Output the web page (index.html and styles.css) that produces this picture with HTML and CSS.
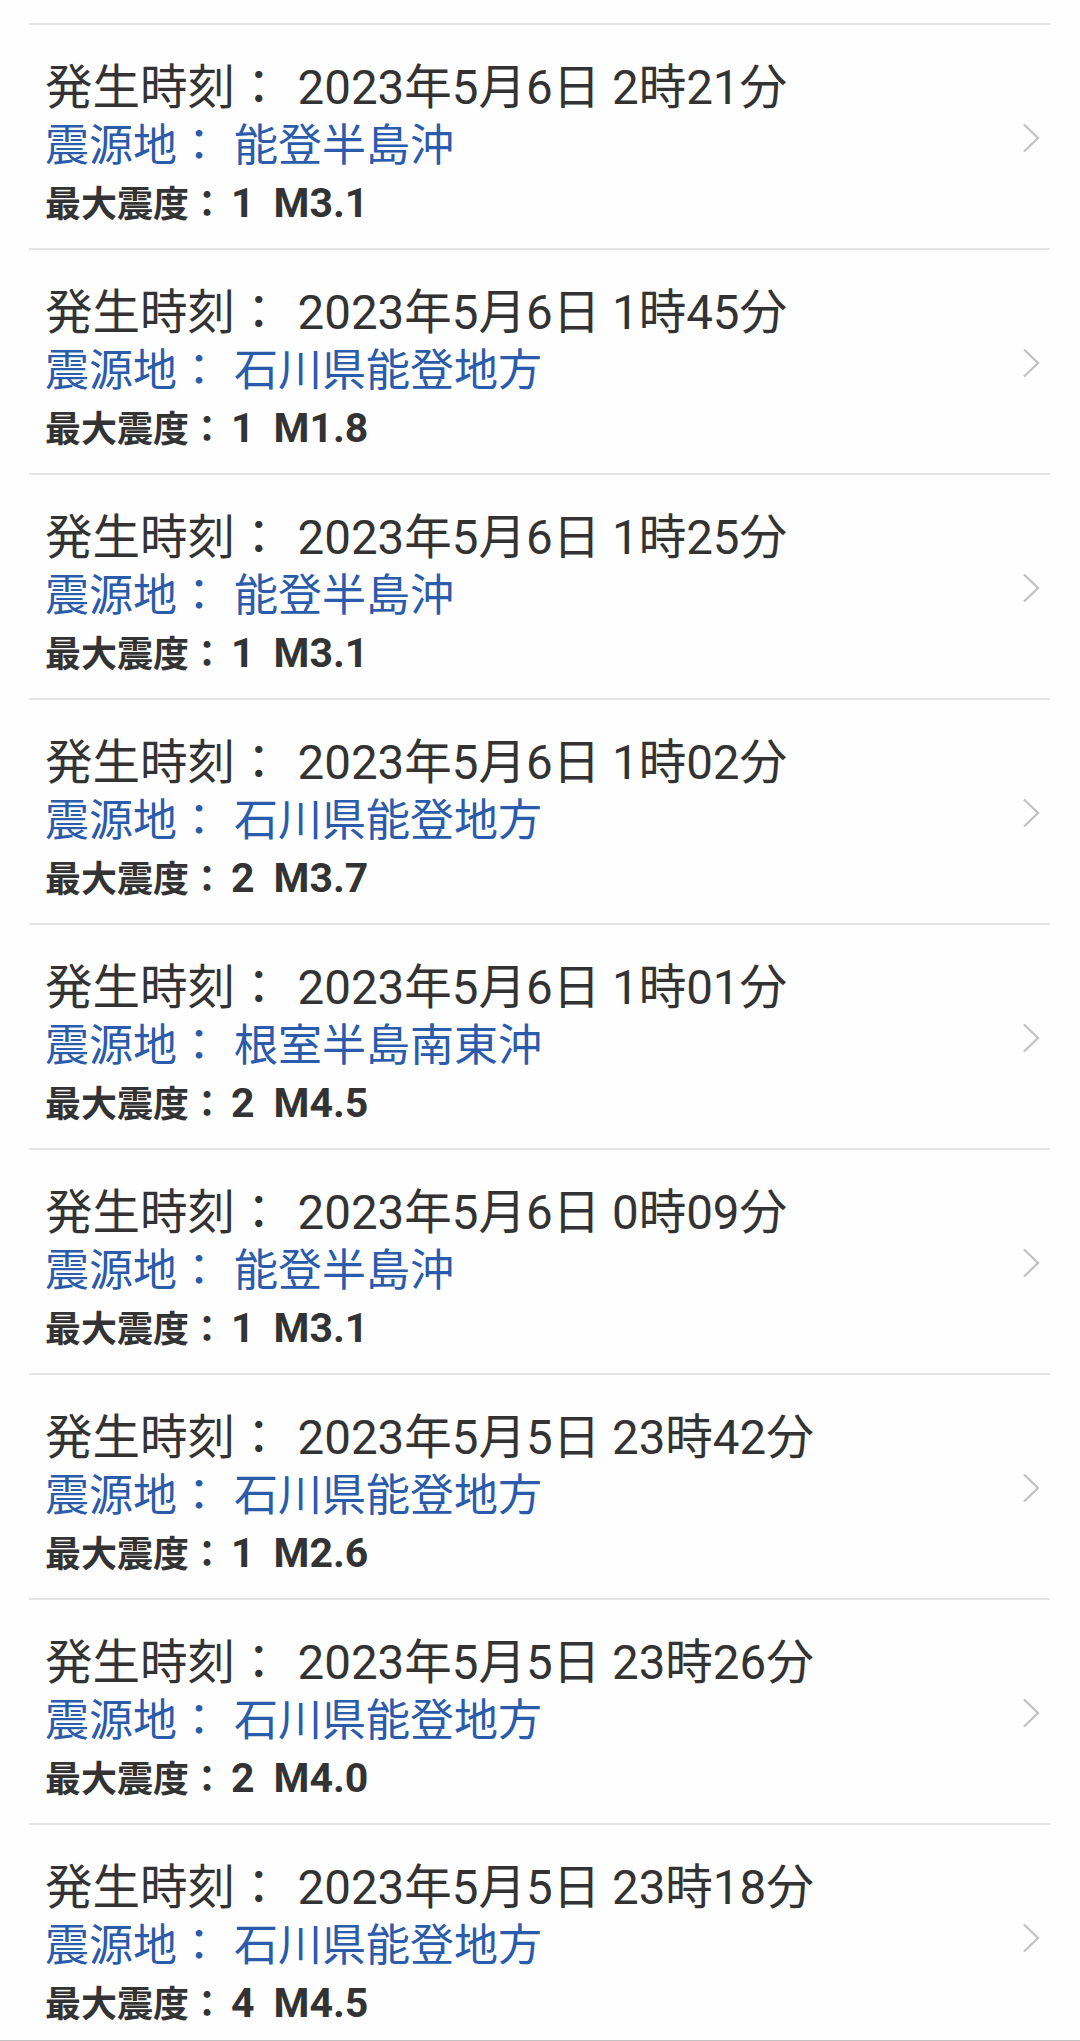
FILE: index.html
```html
<!DOCTYPE html>
<html lang="ja">
<head>
<meta charset="utf-8">
<title>地震情報</title>
<link rel="stylesheet" href="styles.css">
</head>
<body>
<div class="top-gap"></div>
<ul class="list">
  <li class="row">
    <div class="info">
      <div class="l1"><span class="lab">発生時刻：</span><span class="v1">2023年5月6日 2時21分</span></div>
      <div class="l2"><span class="lab">震源地：</span><span class="v2">能登半島沖</span></div>
      <div class="l3"><span class="lab">最大震度：</span><span class="v3">1</span><span class="mag">M3.1</span></div>
    </div>
    <svg class="chev" viewBox="0 0 18 30"><polyline points="2,1.5 16,15 2,28.5"/></svg>
  </li>
  <li class="row">
    <div class="info">
      <div class="l1"><span class="lab">発生時刻：</span><span class="v1">2023年5月6日 1時45分</span></div>
      <div class="l2"><span class="lab">震源地：</span><span class="v2">石川県能登地方</span></div>
      <div class="l3"><span class="lab">最大震度：</span><span class="v3">1</span><span class="mag">M1.8</span></div>
    </div>
    <svg class="chev" viewBox="0 0 18 30"><polyline points="2,1.5 16,15 2,28.5"/></svg>
  </li>
  <li class="row">
    <div class="info">
      <div class="l1"><span class="lab">発生時刻：</span><span class="v1">2023年5月6日 1時25分</span></div>
      <div class="l2"><span class="lab">震源地：</span><span class="v2">能登半島沖</span></div>
      <div class="l3"><span class="lab">最大震度：</span><span class="v3">1</span><span class="mag">M3.1</span></div>
    </div>
    <svg class="chev" viewBox="0 0 18 30"><polyline points="2,1.5 16,15 2,28.5"/></svg>
  </li>
  <li class="row">
    <div class="info">
      <div class="l1"><span class="lab">発生時刻：</span><span class="v1">2023年5月6日 1時02分</span></div>
      <div class="l2"><span class="lab">震源地：</span><span class="v2">石川県能登地方</span></div>
      <div class="l3"><span class="lab">最大震度：</span><span class="v3">2</span><span class="mag">M3.7</span></div>
    </div>
    <svg class="chev" viewBox="0 0 18 30"><polyline points="2,1.5 16,15 2,28.5"/></svg>
  </li>
  <li class="row">
    <div class="info">
      <div class="l1"><span class="lab">発生時刻：</span><span class="v1">2023年5月6日 1時01分</span></div>
      <div class="l2"><span class="lab">震源地：</span><span class="v2">根室半島南東沖</span></div>
      <div class="l3"><span class="lab">最大震度：</span><span class="v3">2</span><span class="mag">M4.5</span></div>
    </div>
    <svg class="chev" viewBox="0 0 18 30"><polyline points="2,1.5 16,15 2,28.5"/></svg>
  </li>
  <li class="row">
    <div class="info">
      <div class="l1"><span class="lab">発生時刻：</span><span class="v1">2023年5月6日 0時09分</span></div>
      <div class="l2"><span class="lab">震源地：</span><span class="v2">能登半島沖</span></div>
      <div class="l3"><span class="lab">最大震度：</span><span class="v3">1</span><span class="mag">M3.1</span></div>
    </div>
    <svg class="chev" viewBox="0 0 18 30"><polyline points="2,1.5 16,15 2,28.5"/></svg>
  </li>
  <li class="row">
    <div class="info">
      <div class="l1"><span class="lab">発生時刻：</span><span class="v1">2023年5月5日 23時42分</span></div>
      <div class="l2"><span class="lab">震源地：</span><span class="v2">石川県能登地方</span></div>
      <div class="l3"><span class="lab">最大震度：</span><span class="v3">1</span><span class="mag">M2.6</span></div>
    </div>
    <svg class="chev" viewBox="0 0 18 30"><polyline points="2,1.5 16,15 2,28.5"/></svg>
  </li>
  <li class="row">
    <div class="info">
      <div class="l1"><span class="lab">発生時刻：</span><span class="v1">2023年5月5日 23時26分</span></div>
      <div class="l2"><span class="lab">震源地：</span><span class="v2">石川県能登地方</span></div>
      <div class="l3"><span class="lab">最大震度：</span><span class="v3">2</span><span class="mag">M4.0</span></div>
    </div>
    <svg class="chev" viewBox="0 0 18 30"><polyline points="2,1.5 16,15 2,28.5"/></svg>
  </li>
  <li class="row">
    <div class="info">
      <div class="l1"><span class="lab">発生時刻：</span><span class="v1">2023年5月5日 23時18分</span></div>
      <div class="l2"><span class="lab">震源地：</span><span class="v2">石川県能登地方</span></div>
      <div class="l3"><span class="lab">最大震度：</span><span class="v3">4</span><span class="mag">M4.5</span></div>
    </div>
    <svg class="chev" viewBox="0 0 18 30"><polyline points="2,1.5 16,15 2,28.5"/></svg>
  </li>
</ul>
</body>
</html>
```
FILE: styles.css
```css
html, body {
  margin: 0;
  padding: 0;
  background: #fefefe;
}
body {
  width: 1080px;
  height: 2041px;
  box-sizing: border-box;
  border-bottom: 1px solid #c2c2c2;
  overflow: hidden;
  font-family: "Roboto", "Noto Sans CJK JP", sans-serif;
  color: #333333;
}
.top-gap {
  height: 23px;
}
.list {
  list-style: none;
  margin: 0 30px 0 29px;
  padding: 0;
}
.row {
  display: flex;
  align-items: flex-start;
  height: 225px;
  box-sizing: border-box;
  border-top: 2px solid #e4e4e4;
}
.info {
  flex: 1;
  padding: 34px 0 0 16px;
}
.l1, .l2 {
  line-height: 58px;
  white-space: nowrap;
}
.l1 {
  font-size: 47.5px;
}
.l2 {
  font-size: 44px;
  color: #2b5bab;
}
.v1 {
  margin-left: 15px;
}
.v2 {
  margin-left: 13px;
}
.l3 {
  font-size: 36px;
  line-height: 56px;
  font-weight: 700;
  white-space: nowrap;
}
.v3, .mag {
  font-size: 41px;
}
.v3 {
  margin-left: 6px;
}
.mag {
  margin-left: 19px;
}
.chev {
  width: 18px;
  height: 30px;
  margin: 98px 10px 0 0;
  fill: none;
  stroke: #c2c2c2;
  stroke-width: 2.3;
}
```
